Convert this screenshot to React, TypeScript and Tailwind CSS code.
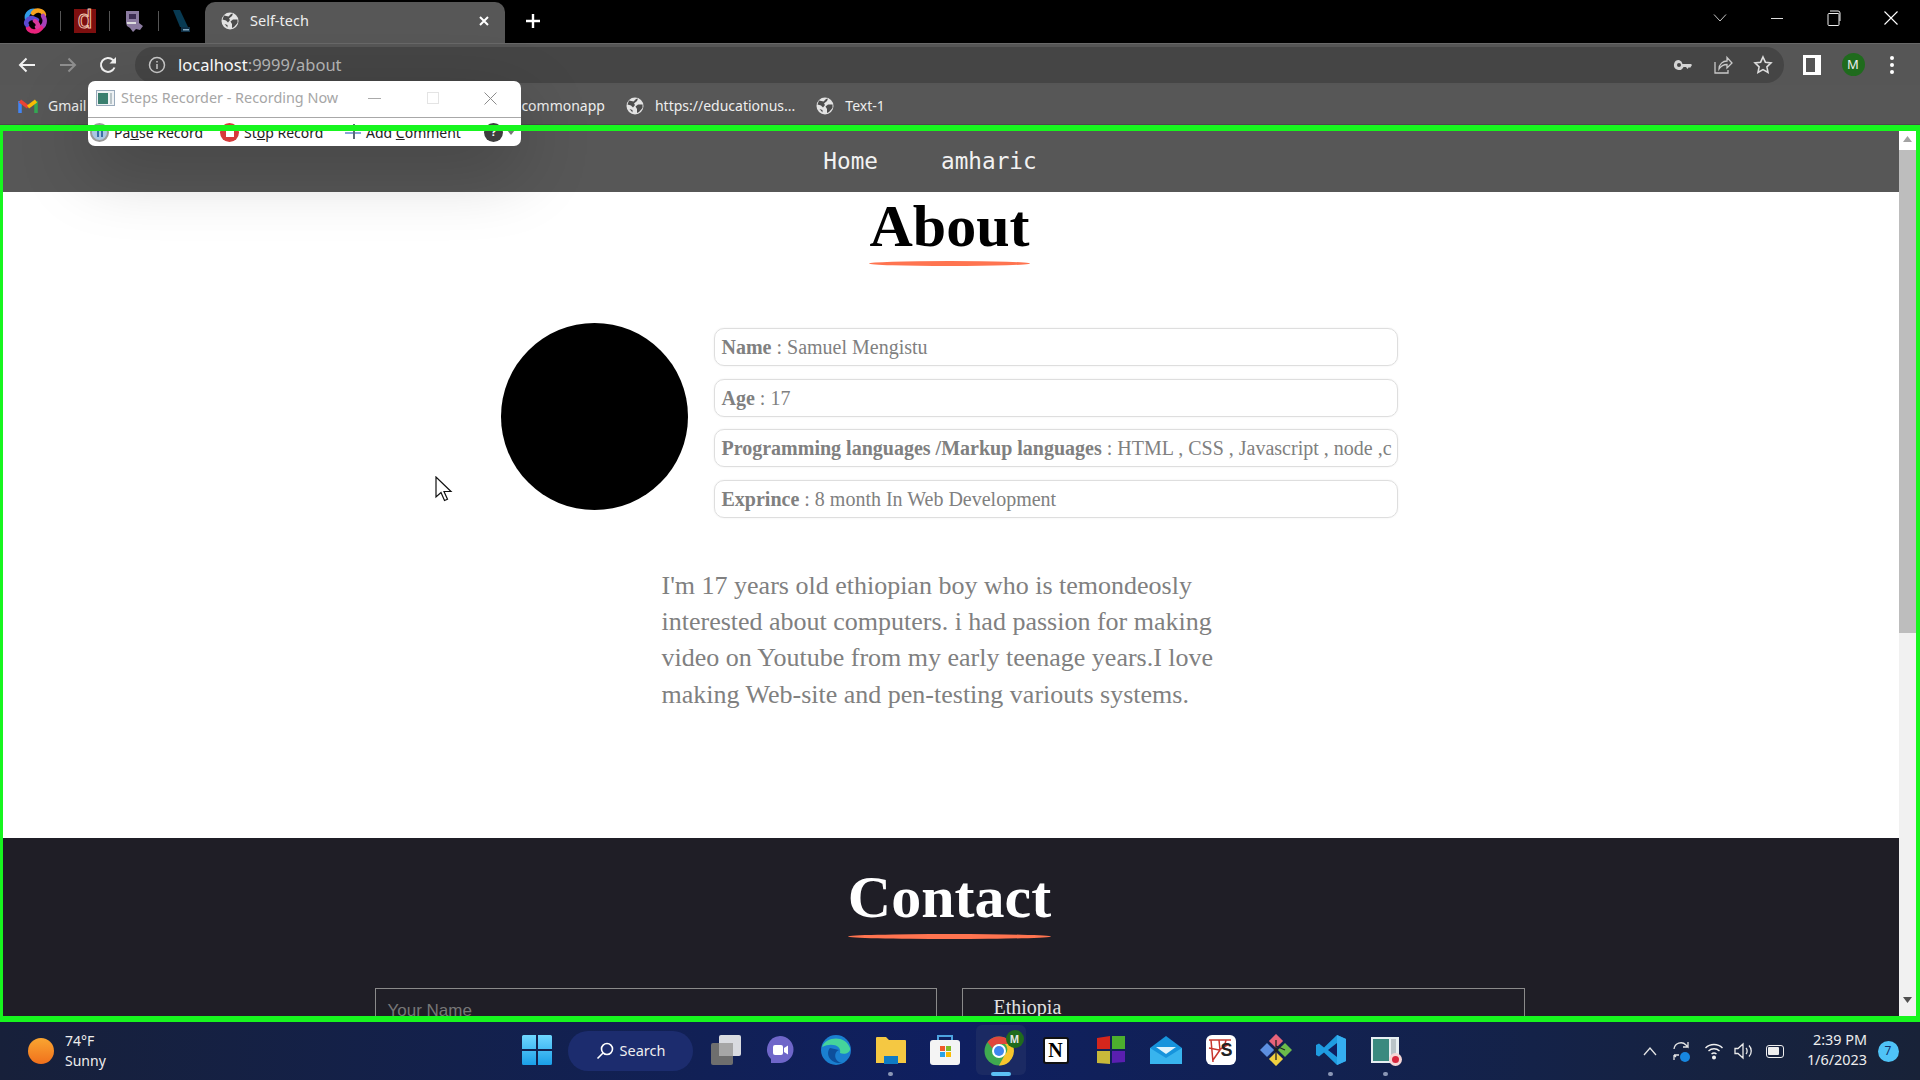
import React from "react";

const Globe = ({ size = 18 }: { size?: number }) => (
  <svg width={size} height={size} viewBox="0 0 18 18" className="shrink-0">
    <circle cx="9" cy="9" r="8.500" fill="#e3e3e3" />
    <path d="M3 3.500 7.500 4.500 10 2 12 1.400 11 4 8 6.500 9 8 7 10.500 5 8.500 1.500 7.500ZM12 7.500 16.500 7.500 16.500 11 13 15 11 16 11 12 9.500 9.500ZM3.500 12 6.500 13 6.500 15.500Z" fill="#4c4c4c" />
  </svg>
);

const Slot = ({ w, children, className = "" }: { w: string; children?: React.ReactNode; className?: string }) => (
  <div className={`flex justify-center items-center shrink-0 ${w} ${className}`}>{children}</div>
);

const TabStrip = () => (
  <div className="h-[43px] bg-black flex items-end shrink-0 relative">
    <div className="flex items-center h-[41px] self-start w-[205px] pl-[10px] shrink-0">
      <Slot w="w-[50px]">
        <svg width="26" height="28" viewBox="0 0 26 28" fill="none" strokeWidth="4.500" strokeLinecap="round">
          <path d="M5 12C4 6 9 3 13 4" stroke="#2f9be8" />
          <path d="M11 6C14 2 21 3 22 8" stroke="#f6a21e" />
          <path d="M21 9C24 13 23 19 18 21" stroke="#a63fb8" />
          <path d="M19 21C15 26 8 25 6 21" stroke="#e8237c" />
          <path d="M5 18C3 16 5 12 9 11C11 10.500 13 12 15 13" stroke="#5a49d0" />
          <path d="M13 14C16 16 17 19 15 20" stroke="#d7389c" />
        </svg>
      </Slot>
      <div className="w-px h-[20px] bg-[#555] shrink-0" />
      <Slot w="w-[48px]">
        <div className="w-[22px] h-[24px] bg-[#7d0f0f] flex items-center justify-center text-transparent [-webkit-text-stroke:1px_#f0c4b0] text-[26px] leading-none font-['Liberation_Sans',sans-serif] pb-1">d</div>
      </Slot>
      <div className="w-px h-[20px] bg-[#555] shrink-0" />
      <Slot w="w-[48px]">
        <svg width="20" height="24" viewBox="0 0 20 24">
          <path d="M2 2h13v12l4 3-3 4-4-1-3 3-3-4-3-2-1-3Z" fill="#8b7ba0" />
          <rect x="5" y="5" width="7" height="5" fill="#3c2d52" />
          <path d="M3 13h9v2H3Z" fill="#ddd" />
        </svg>
      </Slot>
      <div className="w-px h-[20px] bg-[#555] shrink-0" />
      <Slot w="w-[46px]">
        <svg width="22" height="24" viewBox="0 0 22 24">
          <path d="M2 1h7l8 17H9Z" fill="#083a52" />
          <path d="M10 18h9v5h-9Z" fill="#0e2f45" />
          <path d="M12 20h6v1.500h-6Z" fill="#7ea6bf" />
        </svg>
      </Slot>
    </div>
    <div className="w-[300px] h-[41px] bg-[#575757] rounded-t-[10px] flex items-center pl-[16px] pr-[13px] pb-[3px] shrink-0 text-[#eee]">
      <Globe />
      <span className="ml-[11px] text-[14.500px] font-['Noto_Sans',sans-serif] flex-1">Self-tech</span>
      <svg width="14" height="14" viewBox="0 0 14 14" stroke="#fff" strokeWidth="2" className="mr-[1px]"><path d="M3 3l8 8M11 3l-8 8" /></svg>
    </div>
    <div className="h-[41px] self-start flex items-center ml-[19px]">
      <svg width="18" height="18" viewBox="0 0 18 18" stroke="#fff" strokeWidth="2.400"><path d="M9 2v14M2 9h14" /></svg>
    </div>
    <div className="h-[36px] self-start flex items-center ml-auto text-white">
      <Slot w="w-[57px]"><svg width="14" height="10" viewBox="0 0 14 10" fill="none" stroke="#c8c8c8"><path d="M1 1.500l6 6.500 6-6.500" /></svg></Slot>
      <Slot w="w-[57px]"><div className="w-[12px] h-px bg-[#ddd]" /></Slot>
      <Slot w="w-[57px]">
        <svg width="14" height="16" viewBox="0 0 14 16" fill="none" stroke="#eee"><rect x="1" y="3.500" width="11" height="12" rx="1" /><path d="M3 1h8a2 2 0 0 1 2 2v8" /></svg>
      </Slot>
      <Slot w="w-[58px]" className="pr-[1px]"><svg width="16" height="16" viewBox="0 0 16 16" stroke="#fff" strokeWidth="1.100"><path d="M1.500 1.500l13 13M14.500 1.500l-13 13" /></svg></Slot>
    </div>
  </div>
);

const Toolbar = () => (
  <div className="h-[42px] bg-[#565656] flex items-center shrink-0 border-t border-[#686868]">
    <div className="flex items-center w-[135px] pl-[7px] shrink-0">
      <Slot w="w-[40px]"><svg width="20" height="20" viewBox="0 0 20 20" fill="none" stroke="#f2f2f2" strokeWidth="2"><path d="M18 10H3M9.500 3.500 3 10l6.500 6.500" /></svg></Slot>
      <Slot w="w-[41px]"><svg width="20" height="20" viewBox="0 0 20 20" fill="none" stroke="#8f8f8f" strokeWidth="2"><path d="M2 10h15M10.500 3.500 17 10l-6.500 6.500" /></svg></Slot>
      <Slot w="w-[40px]"><svg width="20" height="20" viewBox="0 0 20 20" fill="none" stroke="#f2f2f2" strokeWidth="2"><path d="M16.500 12.500A7 7 0 1 1 15 5l2.500 2.500" /><path d="M18 2v6.500h-6.500" fill="#f2f2f2" stroke="none" /></svg></Slot>
    </div>
    <div className="w-[1649px] h-[36px] bg-[#454545] rounded-full flex items-center pl-[13px] pr-[1px] shrink-0">
      <svg width="18" height="18" viewBox="0 0 18 18" fill="none" stroke="#c9c9c9" strokeWidth="1.500"><circle cx="9" cy="9" r="7.500" /><path d="M9 8v5M9 5v1.500" /></svg>
      <span className="ml-[12px] pt-[2px] text-[16.500px] font-['Noto_Sans',sans-serif] text-white">localhost<span className="text-[#b5b5b5]">:9999/about</span></span>
      <div className="ml-auto flex items-center">
        <Slot w="w-[40px]"><svg width="20" height="14" viewBox="0 0 20 14" fill="#d4d4d4"><path d="M6 2a5 5 0 1 0 4.500 7H13l1.500 2 1.500-2 1 1 2-3-1-1h-8.500A5 5 0 0 0 6 2Zm0 3a2 2 0 1 1 0 4 2 2 0 0 1 0-4Z" fillRule="evenodd" /></svg></Slot>
        <Slot w="w-[40px]"><svg width="20" height="20" viewBox="0 0 20 20" fill="none" stroke="#c9c9c9" strokeWidth="1.300"><path d="M2 7v11h13v-3M6 14c0-5 4-8 8-8V2.500l5 5.500-5 5V9.500c-3 0-6 1.500-8 4.500Z" /></svg></Slot>
        <Slot w="w-[40px]"><svg width="20" height="20" viewBox="0 0 20 20" fill="none" stroke="#ddd" strokeWidth="1.600"><path d="M10 2l2.400 5.200 5.600.700-4.100 3.900 1.100 5.600-5-2.800-5 2.800 1.100-5.600L2 7.900l5.600-.7Z" /></svg></Slot>
      </div>
    </div>
    <Slot w="w-[56px]">
      <div className="w-[18px] h-[20px] bg-white flex justify-start pl-[3px] py-[3px]"><div className="w-[9px] h-full bg-[#555]" /></div>
    </Slot>
    <Slot w="w-[26px]">
      <div className="w-[23px] h-[23px] rounded-full bg-[#1f6b1d] text-[#eee] text-[13px] font-['Noto_Sans',sans-serif] flex items-center justify-center">M</div>
    </Slot>
    <Slot w="w-[52px]" className="flex-col gap-[3px]">
      <div className="w-[4px] h-[4px] rounded-full bg-white" />
      <div className="w-[4px] h-[4px] rounded-full bg-white" />
      <div className="w-[4px] h-[4px] rounded-full bg-white" />
    </Slot>
  </div>
);

const Bookmarks = () => (
  <div className="h-[40px] bg-[#575757] flex items-center shrink-0 pt-[2px] text-[#eee] text-[14px] font-['Noto_Sans',sans-serif] border-b border-[#4a4a4a]">
    <svg width="20" height="16" viewBox="0 0 20 16" className="ml-[18px] shrink-0" fill="none" strokeWidth="3.500">
      <path d="M2 15V3" stroke="#4285f4" />
      <path d="M18 15V3" stroke="#34a853" />
      <path d="M2 3l8 6" stroke="#ea4335" />
      <path d="M10 9l8-6" stroke="#fbbc04" />
    </svg>
    <span className="ml-[10px]">Gmail</span>
    <span className="ml-[435px]">commonapp</span>
    <div className="ml-[21px]"><Globe /></div>
    <span className="ml-[11px]">https://educationus...</span>
    <div className="ml-[21px]"><Globe /></div>
    <span className="ml-[11px]">Text-1</span>
  </div>
);

const Recorder = () => (
  <div className="absolute left-[88px] top-[81px] w-[433px] h-[65px] bg-white rounded-[7px] shadow-[0_24px_70px_rgba(0,0,0,0.22)] flex flex-col font-['Noto_Sans',sans-serif] overflow-hidden">
    <div className="h-[37px] border-b border-[#a8a8a8] flex items-center pl-[8px] pb-[2px] shrink-0">
      <svg width="19" height="16" viewBox="0 0 19 16" className="shrink-0">
        <rect x="0.500" y="0.500" width="18" height="15" fill="#eef2f4" stroke="#9ab" />
        <rect x="2" y="3" width="10" height="11" fill="#3a7f6f" />
        <rect x="14" y="3" width="2" height="11" fill="#b9c4c8" />
      </svg>
      <span className="ml-[6px] text-[14.400px] text-[#a6a6a6] w-[241px] shrink-0 whitespace-nowrap">Steps Recorder - Recording Now</span>
      <Slot w="w-[16px]" className="ml-[4px]"><div className="w-[13px] h-px bg-[#aaa]" /></Slot>
      <Slot w="w-[14px]" className="ml-[44px]"><div className="w-[12px] h-[12px] border border-[#e4e4e4]" /></Slot>
      <Slot w="w-[14px]" className="ml-[43px]"><svg width="13" height="13" viewBox="0 0 13 13" stroke="#8c8c8c" strokeWidth="1"><path d="M.5.500l12 12M12.500.500l-12 12" /></svg></Slot>
    </div>
    <div className="flex items-center h-[28px] pt-[1px] text-[14px] text-[#222] pl-[2px] whitespace-nowrap">
      <div className="w-[19px] h-[19px] rounded-full bg-[#a9c7e2] border-2 border-[#9a9a9a] flex justify-center items-center gap-[2px] shrink-0">
        <div className="w-[2px] h-[8px] bg-[#3a6ea5]" /><div className="w-[2px] h-[8px] bg-[#3a6ea5]" />
      </div>
      <span className="ml-[5px] w-[89px] shrink-0">Pa<u>u</u>se Record</span>
      <div className="ml-[17px] w-[19px] h-[19px] rounded-full bg-[#d63b3b] flex items-center justify-center shrink-0"><div className="w-[8px] h-[8px] bg-white" /></div>
      <span className="ml-[5px] w-[84px] shrink-0">St<u>o</u>p Record</span>
      <svg width="16" height="18" viewBox="0 0 16 18" className="ml-[17px] mb-[4px] shrink-0">
        <rect x="0" y="6" width="11" height="2" fill="#5a7fc0" /><rect x="0" y="10" width="16" height="2" fill="#8aa4d6" />
        <rect x="8" y="2" width="2" height="15" fill="#5b6b77" />
      </svg>
      <span className="ml-[5px] w-[100px] shrink-0">Add <u>C</u>omment</span>
      <div className="ml-[18px] w-[19px] h-[19px] rounded-full bg-[#3e3e3e] flex items-center justify-center text-white text-[11px] font-bold shrink-0">?</div>
      <svg width="8" height="5" viewBox="0 0 8 5" className="ml-[4px] shrink-0"><path d="M0 0h8L4 5Z" fill="#777" /></svg>
    </div>
  </div>
);

const rows: [string, string][] = [
  ["Name", "Samuel Mengistu"],
  ["Age", "17"],
  ["Programming languages /Markup languages", "HTML , CSS , Javascript , node ,c"],
  ["Exprince", "8 month In Web Development"],
];

const Page = () => (
  <div className="flex-1 min-h-0 flex relative overflow-hidden">
    <div className="flex-1 min-w-0 flex flex-col font-['Liberation_Serif',serif]">
      <nav className="h-[67px] bg-[#575757] shrink-0 flex items-center justify-center gap-[63px] pr-[39px] pt-[5px] text-[#f2f2f2] text-[22.700px] font-['DejaVu_Sans_Mono',monospace]">
        <span>Home</span>
        <span>amharic</span>
      </nav>
      <section className="h-[646px] shrink-0 bg-white flex flex-col items-center">
        <div className="inline-flex flex-col">
          <h1 className="text-[60px] leading-[69px] font-bold text-black">About</h1>
          <div className="w-full h-[5px] rounded-[50%] bg-[#ff7450]" />
        </div>
        <div className="mt-[57px] flex w-[898px] items-start">
          <div className="w-[187px] h-[187px] rounded-full bg-black shrink-0" />
          <div className="ml-[26px] w-[684px] flex flex-col gap-[12.500px] mt-[5px]">
            {rows.map(([k, v]) => (
              <div key={k} className="h-[38px] border border-[#dedede] rounded-[10px] flex items-center px-[7px] text-[20px] text-[#808080] whitespace-nowrap overflow-hidden shadow-[0_0_2px_rgba(0,0,0,0.08)]">
                <b className="font-bold">{k}</b>&nbsp;: {v}
              </div>
            ))}
          </div>
        </div>
        <p className="mt-[50px] w-[576px] text-[26px] leading-[36.400px] text-[#808080]">
          I'm 17 years old ethiopian boy who is temondeosly interested about computers. i had passion for making video on Youtube from my early teenage years.I love making Web-site and pen-testing variouts systems.
        </p>
      </section>
      <section className="flex-1 bg-[#1f1e26] flex flex-col items-center overflow-hidden">
        <div className="inline-flex flex-col mt-[25px]">
          <h1 className="text-[60px] leading-[69px] font-bold text-white">Contact</h1>
          <div className="w-full h-[5px] mt-[2px] rounded-[50%] bg-[#ff7450]" />
        </div>
        <div className="mt-[49px] flex gap-[25px] w-[1150px]">
          <div className="w-[562px] h-[60px] border border-[#8a8a8a] px-[12px] pt-[9px] text-[17px] text-[#777] font-['Liberation_Sans',sans-serif] shrink-0">Your Name</div>
          <div className="w-[563px] h-[60px] border border-[#8a8a8a] pl-[31px] pt-[3px] text-[20px] text-[#e2e2e2] shrink-0">Ethiopia</div>
        </div>
      </section>
    </div>
    <div className="w-[21px] shrink-0 pr-[4px] flex flex-col bg-white">
      <div className="h-[25px] shrink-0 flex items-end justify-center pb-[8px] pt-[6px]">
        <svg width="9" height="6" viewBox="0 0 9 6"><path d="M4.500 0 9 6H0Z" fill="#a3a3a3" /></svg>
      </div>
      <div className="w-full h-[483px] bg-[#bdbdbd] shrink-0" />
      <div className="flex-1 bg-[#f1f1f1]" />
      <div className="h-[21px] shrink-0 flex items-start justify-center pt-[2px] mb-[6px] bg-[#f1f1f1]">
        <svg width="9" height="6" viewBox="0 0 9 6"><path d="M0 0h9L4.500 6Z" fill="#505050" /></svg>
      </div>
    </div>
  </div>
);

const Win = () => (
  <svg width="30" height="30" viewBox="0 0 30 30">
    <defs>
      <linearGradient id="w" x1="0" y1="0" x2="0" y2="1"><stop offset="0" stopColor="#6fd6ff" /><stop offset="1" stopColor="#1a9fe8" /></linearGradient>
    </defs>
    <path d="M0 1.500A1.500 1.500 0 0 1 1.500 0H14v14H0ZM16 0h12.500A1.500 1.500 0 0 1 30 1.500V14H16ZM0 16h14v14H1.500A1.500 1.500 0 0 1 0 28.500ZM16 16h14v12.500a1.500 1.500 0 0 1-1.500 1.500H16Z" fill="url(#w)" />
  </svg>
);

const Dot = () => <div className="absolute bottom-[4px] w-[5px] h-[4px] rounded-full bg-[#8b97b5]" />;

const Task = ({ children, dot, active }: { children: React.ReactNode; dot?: boolean; active?: boolean }) => (
  <div className="w-[55px] h-[58px] shrink-0 relative flex items-center justify-center">
    {active && <div className="absolute left-[2.500px] w-[50px] top-[3px] h-[50px] rounded-[6px] bg-[#1b2a63]" />}
    <div className="relative flex items-center justify-center mb-[2px]">{children}</div>
    {dot && <Dot />}
    {active && <div className="absolute bottom-[4px] w-[20px] h-[4px] rounded-full bg-[#5cc0f5]" />}
  </div>
);

const Taskbar = () => (
  <div className="h-[58px] shrink-0 bg-gradient-to-r from-[#17203a] via-[#0f1f60] to-[#182238] flex items-center relative text-white font-['Noto_Sans',sans-serif]">
    <div className="w-[509px] shrink-0 flex items-center pl-[28px]">
      <div className="w-[26px] h-[26px] rounded-full bg-gradient-to-b from-[#f9a531] to-[#f0701c] shrink-0" />
      <div className="ml-[11px] text-[14px] leading-[20px] text-[#eee]">
        <div>74°F</div>
        <div>Sunny</div>
      </div>
    </div>
    <Slot w="w-[55px]" className="mb-[2px]"><Win /></Slot>
    <div className="w-[125px] h-[40px] ml-[4px] mr-[5px] rounded-full bg-[#1c2c6e] shrink-0 flex items-center justify-center gap-[6px] text-[14.500px] text-[#eee]">
      <svg width="18" height="18" viewBox="0 0 18 18" fill="none" stroke="#fff" strokeWidth="1.600"><circle cx="11" cy="7" r="5.500" /><path d="M7 11l-5.500 5.500" /></svg>
      Search
    </div>
    <Task>
      <div className="relative w-[30px] h-[30px]">
        <div className="absolute left-0 bottom-0 w-[22px] h-[22px] bg-[#6e6e6e] rounded-[2px]" />
        <div className="absolute right-0 top-0 w-[22px] h-[21px] bg-[#efefef] rounded-[2px] opacity-90" />
        <div className="absolute left-[8px] top-[8px] w-[14px] h-[13px] bg-[#a6a6a6]" />
      </div>
    </Task>
    <Task>
      <svg width="30" height="30" viewBox="0 0 30 30" className="mr-[2px]">
        <path d="M15 1a13.500 13.500 0 0 1 0 27H6v-4A13.500 13.500 0 0 1 15 1Z" fill="#6f66c9" />
        <rect x="8" y="10" width="10" height="10" rx="2" fill="#fff" /><path d="M19 13l4-2.500v9L19 17Z" fill="#fff" />
      </svg>
    </Task>
    <Task>
      <svg width="32" height="32" viewBox="0 0 32 32">
        <circle cx="16" cy="16" r="15" fill="#1a7fd0" />
        <path d="M2 13C5 3 25 0 30 14c1 5-6 7-10 5 2-7-8-11-18-6Z" fill="#45d49b" />
        <path d="M10 14c-5 6 0 16 12 15-8-1-9-11-3-13Z" fill="#0d4f9c" />
      </svg>
    </Task>
    <Task dot>
      <svg width="30" height="28" viewBox="0 0 30 28">
        <path d="M0 2a1 1 0 0 1 1-1h9l3 3h16a1 1 0 0 1 1 1v22H0Z" fill="#f5c842" />
        <rect x="8" y="20" width="14" height="8" fill="#0f7bc4" />
      </svg>
    </Task>
    <Task>
      <svg width="30" height="32" viewBox="0 0 30 32" className="mr-[1px]">
        <path d="M8 7V2h14v5" fill="none" stroke="#4da3e0" strokeWidth="2" />
        <rect x="0" y="6" width="30" height="25" rx="3" fill="#f4f4f4" />
        <rect x="10" y="12" width="5" height="5" fill="#f05a2a" /><rect x="16" y="12" width="5" height="5" fill="#7eba2a" />
        <rect x="10" y="18" width="5" height="5" fill="#2aa3e6" /><rect x="16" y="18" width="5" height="5" fill="#fbbc04" />
      </svg>
    </Task>
    <Task active>
      <div className="relative w-[30px] h-[32px]">
        <svg width="30" height="30" viewBox="0 0 30 30" className="absolute left-[-2px] top-[2px]">
          <circle cx="15" cy="15" r="14.500" fill="#3faa4f" />
          <path d="M15 .500A14.500 14.500 0 0 1 28 8H15a7 7 0 0 0-6.500 4.500L3.500 6A14.500 14.500 0 0 1 15 .500Z" fill="#e0473c" />
          <path d="M28 8a14.500 14.500 0 0 1-13 21.500l6-11A7 7 0 0 0 21 8Z" fill="#f7c52d" />
          <circle cx="15" cy="15" r="7" fill="#fff" /><circle cx="15" cy="15" r="5" fill="#3f86ee" />
        </svg>
        <div className="absolute right-[-8px] top-[-4px] w-[18px] h-[18px] rounded-full bg-[#1f6b1d] text-[10px] font-bold flex items-center justify-center text-[#e6e6e6]">M</div>
      </div>
    </Task>
    <Task>
      <div className="w-[26px] h-[27px] bg-white border-2 border-[#111] rounded-[3px] flex items-center justify-center text-black font-bold text-[20px] leading-none font-['Liberation_Serif',serif]">N</div>
    </Task>
    <Task>
      <svg width="28" height="30" viewBox="0 0 28 30">
        <path d="M0 3 13 1v13H0Z" fill="#d4261c" /><path d="M15 1 28 1v13H15Z" fill="#4caf2e" />
        <path d="M0 16h13v13L0 28Z" fill="#c8b83a" /><path d="M15 16h13v11l-13 1Z" fill="#5a1fb0" />
      </svg>
    </Task>
    <Task>
      <svg width="32" height="28" viewBox="0 0 32 28">
        <path d="M16 0 32 12v16H0V12Z" fill="#1794dc" /><path d="M0 12l16 10 16-10v16H0Z" fill="#38b4ee" />
        <path d="M6 11h20l-10 7Z" fill="#dff3fc" />
      </svg>
    </Task>
    <Task>
      <div className="relative w-[30px] h-[30px] bg-white rounded-[6px] flex items-center justify-end pr-[3px] pb-[1px] overflow-hidden">
        <svg width="30" height="30" viewBox="0 0 30 30" className="absolute inset-0" fill="none" stroke="#c8372e" strokeWidth="1.500"><path d="M3 5h22M5 5l2 22M3 13l10 2 10-6M13 5l1 10-7 10M20 5l-2 8" /></svg>
        <span className="relative text-[#222] text-[18px] font-bold leading-none font-['Liberation_Sans',sans-serif]">S</span>
      </div>
    </Task>
    <Task>
      <svg width="32" height="32" viewBox="0 0 32 32">
        <rect x="11" y="2" width="10" height="10" transform="rotate(45 16 7)" fill="#e8637a" />
        <rect x="2" y="11" width="10" height="10" transform="rotate(45 7 16)" fill="#5d8fe0" />
        <rect x="20" y="11" width="10" height="10" transform="rotate(45 25 16)" fill="#6cbb4a" />
        <rect x="11" y="20" width="10" height="10" transform="rotate(45 16 25)" fill="#f0d040" />
        <path d="M16 6v20M16 12l9 4" stroke="#222" strokeWidth="1.300" fill="none" />
        <circle cx="16" cy="16" r="2" fill="#222" />
      </svg>
    </Task>
    <Task dot>
      <svg width="30" height="30" viewBox="0 0 30 30">
        <path d="M21 0 30 4v22l-9 4L8 17.500 3 21.500 0 20v-10l3-1.500 5 4Z" fill="#1f9ce0" />
        <path d="M21 8v14l-9-7Z" fill="#0f1f60" />
        <path d="M21 0 30 4v22l-9 4Z" fill="#35aef0" />
      </svg>
    </Task>
    <Task dot>
      <div className="relative w-[28px] h-[26px] bg-[#e7eff2] flex p-[2px] gap-[2px] mr-[2px]">
        <div className="w-[16px] h-full bg-[#3a8a7f]" />
        <div className="w-[5px] h-[16px] bg-[#b9c4c8]" />
        <div className="absolute right-[-3px] bottom-[-3px] w-[13px] h-[13px] rounded-full bg-[#f5d6d6] flex items-center justify-center"><div className="w-[7px] h-[7px] rounded-full bg-[#d7263d]" /></div>
      </div>
    </Task>
    <div className="ml-auto flex items-center h-full shrink-0">
      <Slot w="w-[30px]"><svg width="14" height="9" viewBox="0 0 14 9" fill="none" stroke="#e5e5e5" strokeWidth="1.300"><path d="M1 8l6-7 6 7" /></svg></Slot>
      <Slot w="w-[32px]">
        <div className="relative">
          <svg width="20" height="22" viewBox="0 0 20 22" fill="none" stroke="#e5e5e5" strokeWidth="1.300"><path d="M3 9a7 7 0 0 1 12-4l2 2V2M17 7h-5M3 15v5M3 15h5M3 15l2 2" /></svg>
          <div className="absolute right-[1px] bottom-[0px] w-[10px] h-[10px] rounded-full bg-[#1787e0]" />
        </div>
      </Slot>
      <Slot w="w-[33px]"><svg width="20" height="18" viewBox="0 0 20 18" fill="none" stroke="#f0f0f0" strokeWidth="1.400"><path d="M1.500 6a12 12 0 0 1 17 0M4.500 9a8 8 0 0 1 11 0M7.500 12a4 4 0 0 1 5 0" /><circle cx="10" cy="15.500" r="1.300" fill="#f0f0f0" /></svg></Slot>
      <Slot w="w-[28px]"><svg width="20" height="18" viewBox="0 0 20 18" fill="none" stroke="#eaeaea" strokeWidth="1.300"><path d="M1 6.500h3L9 2v14l-5-4.500H1ZM12 6c1.500 1.500 1.500 4.500 0 6M15 3.500c3 3 3 8 0 11" /></svg></Slot>
      <Slot w="w-[33px]"><div className="w-[18px] h-[13px] rounded-[3px] border border-[#eee] p-[1.500px]"><div className="w-[11px] h-full bg-[#eee] rounded-[1px]" /></div></Slot>
      <div className="w-[73px] ml-[3px] mb-[2px] text-[14.400px] leading-[20px] text-right text-[#eee] shrink-0 whitespace-nowrap">
        <div>2:39 PM</div>
        <div>1/6/2023</div>
      </div>
      <Slot w="w-[42px]" className="mr-[11px]"><div className="w-[21px] h-[21px] rounded-full bg-[#4fc3f7] text-[#12306a] text-[12px] flex items-center justify-center">7</div></Slot>
    </div>
  </div>
);

const Cursor = () => (
  <svg width="18" height="26" viewBox="0 0 18 26" className="absolute left-[435px] top-[476px] pointer-events-none">
    <path d="M1 1v20l5-4.500 3.500 8 3-1.300-3.500-7.700h7Z" fill="#fff" stroke="#111" strokeWidth="1.200" />
  </svg>
);

export default function App() {
  return (
    <div className="w-[1920px] h-[1080px] relative overflow-hidden flex flex-col bg-black">
      <TabStrip />
      <Toolbar />
      <Bookmarks />
      <Page />
      <Taskbar />
      <Recorder />
      <Cursor />
      <div className="absolute left-0 top-[125px] w-[1920px] h-[897px] border-[#17f61f] border-l-[3px] border-r-[4px] border-t-[6px] border-b-[6px] pointer-events-none" />
    </div>
  );
}
